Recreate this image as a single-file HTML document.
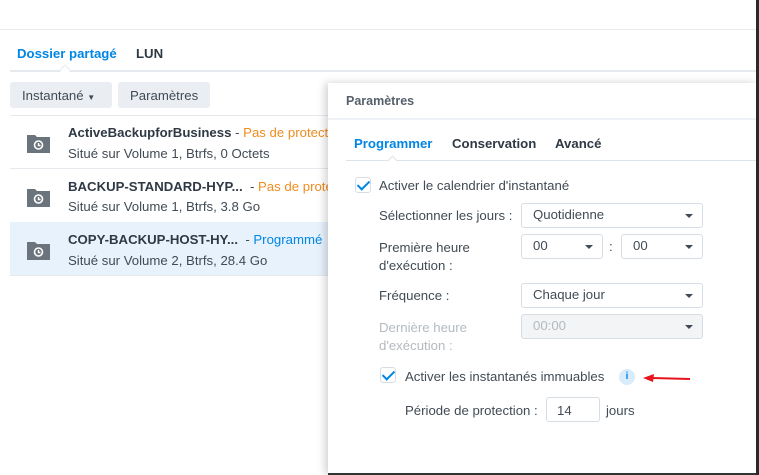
<!DOCTYPE html><html><head><meta charset="utf-8"><style>
*{box-sizing:border-box;margin:0;padding:0}
body{width:759px;height:475px;overflow:hidden;background:#fff;font-family:"Liberation Sans",sans-serif;font-size:13.2px;color:#414b55;position:relative}
.a{position:absolute;white-space:nowrap}
.b{font-weight:bold}
.sel{position:absolute;border:1px solid #d7dde4;border-radius:3px;background:#fff;padding-left:11px;line-height:22px}
.sel:after{content:"";position:absolute;right:9px;top:10px;border-left:4px solid transparent;border-right:4px solid transparent;border-top:4px solid #414b55}
.cb{position:absolute;width:16px;height:16px;border:1px solid #d7dde4;border-radius:3px}
.cb:after{content:"";position:absolute;left:4px;top:0px;width:5px;height:10px;border-right:2px solid #0086e5;border-bottom:2px solid #0086e5;transform:rotate(45deg)}
.ic{position:absolute;left:27px;width:23px;height:20px}
</style></head><body>
<div class="a" style="left:0;top:29px;width:759px;height:1px;background:#e6eaef"></div>
<div class="a b" style="left:17px;top:46px;color:#0086e5">Dossier partagé</div>
<div class="a b" style="left:136px;top:46px;color:#2f3944">LUN</div>
<div class="a" style="left:10px;top:70px;width:749px;height:2px;background:#e6eaef"></div>
<div class="a" style="left:61px;top:66px;width:8px;height:8px;background:#fff;border-left:1px solid #e6eaef;border-top:1px solid #e6eaef;transform:rotate(45deg)"></div>
<div class="a" style="left:10px;top:82px;width:102px;height:26px;background:#eaeef2;border-radius:3px;padding:6px 0 0 12px">Instantané <span style="font-size:8px">▼</span></div>
<div class="a" style="left:118px;top:82px;width:92px;height:26px;background:#eaeef2;border-radius:3px;padding:6px 0 0 12px">Paramètres</div>
<div class="a" style="left:10px;top:115px;width:749px;height:1px;background:#e6eaef"></div>
<div class="a" style="left:10px;top:168px;width:749px;height:1px;background:#e6eaef"></div>
<div class="a" style="left:10px;top:222px;width:749px;height:54px;background:#e8f2fc;border-bottom:1px solid #e6eaef"></div>
<svg class="ic" style="top:133px" viewBox="0 0 23 20"><path d="M0 2h8l2 2h13v16H0z" fill="#6b747d"/><circle cx="11.5" cy="12" r="4" fill="none" stroke="#fff" stroke-width="1.6"/><path d="M11.5 10v2.5h2" stroke="#fff" fill="none" stroke-width="1.4"/></svg>
<svg class="ic" style="top:187px" viewBox="0 0 23 20"><path d="M0 2h8l2 2h13v16H0z" fill="#6b747d"/><circle cx="11.5" cy="12" r="4" fill="none" stroke="#fff" stroke-width="1.6"/><path d="M11.5 10v2.5h2" stroke="#fff" fill="none" stroke-width="1.4"/></svg>
<svg class="ic" style="top:240px" viewBox="0 0 23 20"><path d="M0 2h8l2 2h13v16H0z" fill="#6b747d"/><circle cx="11.5" cy="12" r="4" fill="none" stroke="#fff" stroke-width="1.6"/><path d="M11.5 10v2.5h2" stroke="#fff" fill="none" stroke-width="1.4"/></svg>
<div class="a" style="left:68px;top:125px"><span class="b" style="color:#2f3944">ActiveBackupforBusiness</span> - <span style="color:#f08c1e">Pas de protection</span></div>
<div class="a" style="left:68px;top:146px">Situé sur Volume 1, Btrfs, 0 Octets</div>
<div class="a" style="left:68px;top:179px"><span class="b" style="color:#2f3944">BACKUP-STANDARD-HYP...</span>&nbsp; - <span style="color:#f08c1e">Pas de protection</span></div>
<div class="a" style="left:68px;top:199px">Situé sur Volume 1, Btrfs, 3.8 Go</div>
<div class="a" style="left:68px;top:232px"><span class="b" style="color:#2f3944">COPY-BACKUP-HOST-HY...</span>&nbsp; - <span style="color:#0086e5">Programmé</span></div>
<div class="a" style="left:68px;top:253px">Situé sur Volume 2, Btrfs, 28.4 Go</div>

<div class="a" style="left:328px;top:83px;width:430px;height:392px;background:#fff;box-shadow:-3px 0 8px rgba(0,0,0,.18);border-bottom:2px solid #333"></div>
<div class="a b" style="left:346px;top:94px;color:#55606b;font-size:12.5px">Paramètres</div>
<div class="a" style="left:328px;top:118px;width:430px;height:2px;background:#eef1f5"></div>
<div class="a b" style="left:354px;top:136px;color:#0086e5">Programmer</div>
<div class="a b" style="left:452px;top:136px;color:#2f3944">Conservation</div>
<div class="a b" style="left:555px;top:136px;color:#2f3944">Avancé</div>
<div class="a" style="left:346px;top:160px;width:412px;height:1px;background:#dde3ea"></div>
<div class="a" style="left:389px;top:157px;width:7px;height:7px;background:#fff;border-left:1px solid #dde3ea;border-top:1px solid #dde3ea;transform:rotate(45deg)"></div>
<div class="cb" style="left:355px;top:177px"></div>
<div class="a" style="left:379px;top:178px">Activer le calendrier d'instantané</div>
<div class="a" style="left:379px;top:208px">Sélectionner les jours :</div>
<div class="sel" style="left:521px;top:203px;width:182px;height:25px">Quotidienne</div>
<div class="a" style="left:379px;top:239px;line-height:18px">Première heure<br>d'exécution :</div>
<div class="sel" style="left:521px;top:234px;width:82px;height:25px">00</div>
<div class="a" style="left:609px;top:239px">:</div>
<div class="sel" style="left:621px;top:234px;width:82px;height:25px">00</div>
<div class="a" style="left:379px;top:288px">Fréquence :</div>
<div class="sel" style="left:521px;top:283px;width:182px;height:25px">Chaque jour</div>
<div class="a" style="left:379px;top:319px;line-height:18px;color:#b4bac0">Dernière heure<br>d'exécution :</div>
<div class="sel" style="left:521px;top:314px;width:182px;height:25px;background:#f2f4f6;color:#b4bac0">00:00</div>
<div class="cb" style="left:380px;top:367px"></div>
<div class="a" style="left:405px;top:369px">Activer les instantanés immuables</div>
<div class="a" style="left:619px;top:369px;width:16px;height:16px;border-radius:50%;background:#d9ecfc;color:#0086e5;font-size:10px;font-weight:bold;text-align:center;line-height:16px">i</div>
<svg class="a" style="left:640px;top:372px" width="55" height="12"><path d="M50 7L12 6" stroke="#e8141b" stroke-width="2"/><path d="M3 6L14 2L13 10z" fill="#e8141b"/></svg>
<div class="a" style="left:405px;top:403px">Période de protection :</div>
<div class="a" style="left:546px;top:397px;width:54px;height:25px;border:1px solid #d7dde4;border-radius:3px;padding:5px 0 0 10px">14</div>
<div class="a" style="left:606px;top:403px">jours</div>
<div class="a" style="left:756px;top:0;width:3px;height:475px;background:#2a2a2a"></div>
</body></html>
